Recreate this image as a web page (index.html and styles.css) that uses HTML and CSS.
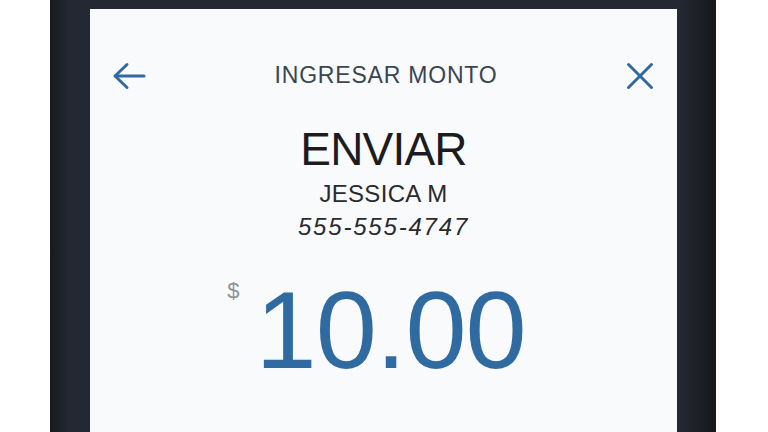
FILE: index.html
```html
<!DOCTYPE html>
<html lang="es">
<head>
    <meta charset="UTF-8">
    <meta name="viewport" content="width=device-width, initial-scale=1.0">
    <title>Ingresar Monto</title>
    <link rel="stylesheet" href="styles.css">
</head>
<body>
    <div class="phone">
        <div class="screen">
            <header class="top-bar">
                <button class="icon-btn" aria-label="Volver">
                    <svg width="34" height="28" viewBox="0 0 34 28" fill="none" stroke="currentColor" stroke-width="3" stroke-linecap="round" stroke-linejoin="round">
                        <path d="M32 14 H3.5"/>
                        <path d="M15 2.5 L3 14 L15 25.5"/>
                    </svg>
                </button>
                <h1 class="title">INGRESAR MONTO</h1>
                <button class="icon-btn" aria-label="Cerrar">
                    <svg width="28" height="28" viewBox="0 0 28 28" fill="none" stroke="currentColor" stroke-width="3" stroke-linecap="round">
                        <path d="M2.5 2.5 L25.5 25.5"/>
                        <path d="M25.5 2.5 L2.5 25.5"/>
                    </svg>
                </button>
            </header>

            <div class="recipient">
                <h2 class="action">ENVIAR</h2>
                <p class="name">JESSICA M</p>
                <p class="phone-number">555-555-4747</p>
            </div>

            <div class="amount">
                <span class="currency">$</span>
                <span class="value">10.00</span>
            </div>
        </div>
    </div>
</body>
</html>
```

FILE: styles.css
```css
:root {
    --frame-color: #22262f;
    --screen-background: #f8fafc;
    --blue: #2f6aa1;
    --title-color: #3a4552;
    --text-color: #1c1c20;
    --muted: #8b929b;
}

body {
    margin: 0;
    background-color: #ffffff;
    font-family: 'Liberation Sans', Arial, sans-serif;
    overflow: hidden;
}

.phone {
    box-sizing: border-box;
    width: 666px;
    height: 432px;
    margin-left: 50px;
    padding: 9px 39px 0 40px;
    background: linear-gradient(to right, #17191e 0, #242833 18px, #242833 630px, #16181c 666px);
}

.screen {
    height: 100%;
    background-color: var(--screen-background);
    padding-top: 53px;
    box-sizing: border-box;
}

/* Header */
.top-bar {
    display: flex;
    align-items: center;
    justify-content: space-between;
    height: 27px;
    padding: 0 23px 0 22px;
}

.icon-btn {
    display: flex;
    padding: 0;
    border: none;
    background: none;
    color: var(--blue);
}

.title {
    margin: 0;
    font-size: 23px;
    font-weight: 400;
    line-height: 27px;
    letter-spacing: 0.8px;
    color: var(--title-color);
}

/* Recipient */
.recipient {
    margin-top: 37px;
    text-align: center;
}

.action {
    margin: 0;
    font-size: 46px;
    font-weight: 400;
    line-height: 46px;
    letter-spacing: -0.8px;
    color: var(--text-color);
}

.name {
    margin: 8px 0 0;
    font-size: 24px;
    line-height: 28px;
    letter-spacing: 0.3px;
    color: #2a2a2e;
}

.phone-number {
    margin: 5px 0 0;
    font-size: 24px;
    font-style: italic;
    line-height: 28px;
    letter-spacing: 1.8px;
    color: #2a2a2e;
}

/* Amount */
.amount {
    display: flex;
    justify-content: center;
    align-items: flex-start;
    gap: 16px;
    margin-top: 34px;
    padding-right: 14px;
}

.currency {
    margin-top: 5px;
    font-size: 22px;
    line-height: 22px;
    color: var(--muted);
}

.value {
    font-size: 110px;
    line-height: 110px;
    letter-spacing: -1px;
    color: var(--blue);
}
```
